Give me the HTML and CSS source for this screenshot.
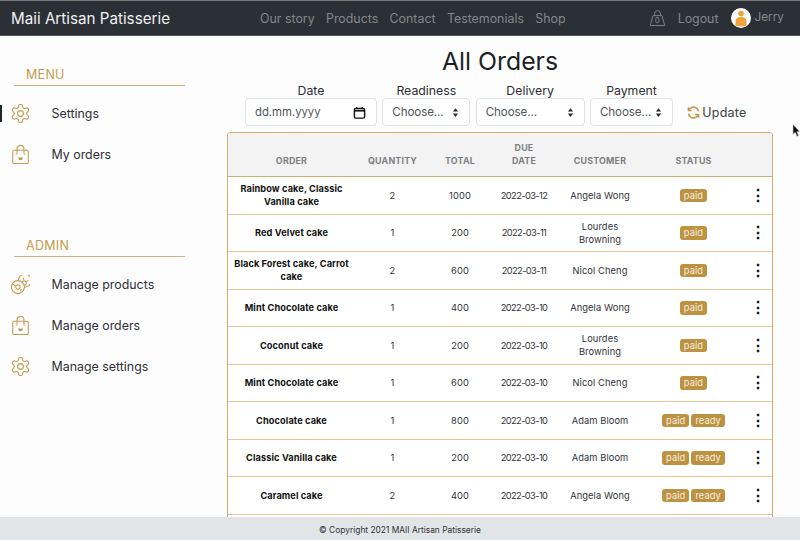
FILE: index.html
```html
<!DOCTYPE html>
<html lang="en">
<head>
<meta charset="utf-8">
<title>All Orders</title>
<link rel="stylesheet" href="styles.css">
</head>
<body>
<svg class="defs" width="0" height="0" aria-hidden="true">
  <defs>
    <symbol id="gear" viewBox="1.500 1.500 21 21"><path d="M12.22 2h-.44a2 2 0 0 0-2 2v.18a2 2 0 0 1-1 1.73l-.43.25a2 2 0 0 1-2 0l-.15-.08a2 2 0 0 0-2.73.73l-.22.38a2 2 0 0 0 .73 2.73l.15.1a2 2 0 0 1 1 1.72v.51a2 2 0 0 1-1 1.74l-.15.09a2 2 0 0 0-.73 2.73l.22.38a2 2 0 0 0 2.73.73l.15-.08a2 2 0 0 1 2 0l.43.25a2 2 0 0 1 1 1.73V20a2 2 0 0 0 2 2h.44a2 2 0 0 0 2-2v-.18a2 2 0 0 1 1-1.73l.43-.25a2 2 0 0 1 2 0l.15.08a2 2 0 0 0 2.73-.73l.22-.39a2 2 0 0 0-.73-2.73l-.15-.08a2 2 0 0 1-1-1.74v-.5a2 2 0 0 1 1-1.74l.15-.09a2 2 0 0 0 .73-2.73l-.22-.38a2 2 0 0 0-2.73-.73l-.15.08a2 2 0 0 1-2 0l-.43-.25a2 2 0 0 1-1-1.73V4a2 2 0 0 0-2-2z"/><circle cx="12" cy="12" r="3.200"/></symbol>
    <symbol id="bag" viewBox="1.500 0.500 21 22"><rect x="3" y="6.500" width="18" height="15.500" rx="1.500"/><path d="M8 10V5a4 4 0 0 1 8 0v5"/><path d="M6.500 11h2M15.500 11h2"/><path d="M10 15.500c0 2.600 4 2.600 4 0z" fill="currentColor"/></symbol>
    <symbol id="donuts" viewBox="1 1 22 22"><circle cx="9" cy="15" r="7.500"/><circle cx="9" cy="15" r="2.600"/><path d="M9.500 7.500A7.500 7.500 0 1 1 16.500 15"/><path d="M13.500 10a2.600 2.600 0 1 1 2.800 2.800"/><path d="M3 11.500l3 2M12 20l1-3M15 4l1 3M21 7l-2 2"/></symbol>
  </defs>
</svg>
<header class="navbar">
  <a class="brand">Maii Artisan Patisserie</a>
  <nav class="nav-links">
    <a>Our story</a><a>Products</a><a>Contact</a><a>Testemonials</a><a>Shop</a>
  </nav>
  <div class="nav-right">
    <span class="cart">
      <svg viewBox="0 0 18 18" width="17" height="18"><path d="M4.200 6.500h9.600L16.600 17H1.400z"/><path d="M6 6.500V4.200a3 3 0 0 1 6 0v2.300"/></svg>
      <span class="cart-num">0</span>
    </span>
    <a class="logout">Logout</a>
    <span class="avatar">
      <svg viewBox="0 0 20 20" width="20" height="20"><circle cx="10" cy="10" r="10" fill="#fff"/><circle cx="10" cy="5.600" r="2.800" fill="#eda33c"/><path d="M4.500 17.500v-4.200c0-2.600 2-4.300 5.500-4.300s5.500 1.700 5.500 4.300v4.200c-3 1.200-8 1.200-11 0z" fill="#eda33c"/></svg>
    </span>
    <span class="user">Jerry</span>
  </div>
</header>
<div class="layout">
  <aside class="sidebar">
    <section class="side-group">
      <h2 class="side-title">MENU</h2>
      <a class="side-item active"><svg class="side-icon"><use href="#gear"/></svg><span>Settings</span></a>
      <a class="side-item"><svg class="side-icon"><use href="#bag"/></svg><span>My orders</span></a>
    </section>
    <section class="side-group admin">
      <h2 class="side-title">ADMIN</h2>
      <a class="side-item"><svg class="side-icon"><use href="#donuts"/></svg><span>Manage products</span></a>
      <a class="side-item"><svg class="side-icon"><use href="#bag"/></svg><span>Manage orders</span></a>
      <a class="side-item"><svg class="side-icon"><use href="#gear"/></svg><span>Manage settings</span></a>
    </section>
  </aside>
  <main class="main">
    <h1 class="title">All Orders</h1>
    <div class="filters">
      <div class="field f-date"><label>Date</label>
        <div class="control"><span class="date-text">dd.mm.yyyy</span>
          <svg viewBox="0 0 14 14" width="13" height="13"><rect x="1.500" y="2.500" width="11" height="10.500" rx="1.500" fill="none" stroke="#111" stroke-width="1.500"/><path d="M1.500 5h11" stroke="#111" stroke-width="2"/><path d="M4 1v2M10 1v2" stroke="#111" stroke-width="1.500"/></svg>
        </div>
      </div>
      <div class="field f-ready"><label>Readiness</label><div class="control"><span>Choose...</span><svg class="updown" viewBox="0 0 8 12" width="7" height="11"><path d="M4 1l3 3.800H1zM4 11l3-3.800H1z"/></svg></div></div>
      <div class="field f-deliv"><label>Delivery</label><div class="control"><span>Choose...</span><svg class="updown" viewBox="0 0 8 12" width="7" height="11"><path d="M4 1l3 3.800H1zM4 11l3-3.800H1z"/></svg></div></div>
      <div class="field f-pay"><label>Payment</label><div class="control"><span>Choose...</span><svg class="updown" viewBox="0 0 8 12" width="7" height="11"><path d="M4 1l3 3.800H1zM4 11l3-3.800H1z"/></svg></div></div>
      <button class="update">
        <svg viewBox="0 0 16 16" width="13" height="13"><path d="M14 6.500A6 6 0 0 0 3.500 3.500L1.800 5.500M2 9.500a6 6 0 0 0 10.500 3l1.700-2"/><path d="M1.800 1.500v4h4M14.200 14.500v-4h-4"/></svg>
        Update
      </button>
    </div>
    <div class="table-wrap">
      <table class="orders">
        <colgroup><col class="c-order"><col class="c-qty"><col class="c-total"><col class="c-date"><col class="c-cust"><col class="c-status"><col class="c-menu"></colgroup>
        <thead><tr><th>ORDER</th><th>QUANTITY</th><th>TOTAL</th><th>DUE<br>DATE</th><th>CUSTOMER</th><th>STATUS</th><th></th></tr></thead>
        <tbody>
          <tr><td class="name">Rainbow cake, Classic Vanilla cake</td><td>2</td><td>1000</td><td class="due">2022-03-12</td><td>Angela Wong</td><td><span class="badge">paid</span></td><td class="dots">⋮</td></tr>
          <tr><td class="name">Red Velvet cake</td><td>1</td><td>200</td><td class="due">2022-03-11</td><td>Lourdes Browning</td><td><span class="badge">paid</span></td><td class="dots">⋮</td></tr>
          <tr><td class="name">Black Forest cake, Carrot cake</td><td>2</td><td>600</td><td class="due">2022-03-11</td><td>Nicol Cheng</td><td><span class="badge">paid</span></td><td class="dots">⋮</td></tr>
          <tr><td class="name">Mint Chocolate cake</td><td>1</td><td>400</td><td class="due">2022-03-10</td><td>Angela Wong</td><td><span class="badge">paid</span></td><td class="dots">⋮</td></tr>
          <tr><td class="name">Coconut cake</td><td>1</td><td>200</td><td class="due">2022-03-10</td><td>Lourdes Browning</td><td><span class="badge">paid</span></td><td class="dots">⋮</td></tr>
          <tr><td class="name">Mint Chocolate cake</td><td>1</td><td>600</td><td class="due">2022-03-10</td><td>Nicol Cheng</td><td><span class="badge">paid</span></td><td class="dots">⋮</td></tr>
          <tr><td class="name">Chocolate cake</td><td>1</td><td>800</td><td class="due">2022-03-10</td><td>Adam Bloom</td><td><span class="badge">paid</span><span class="badge">ready</span></td><td class="dots">⋮</td></tr>
          <tr><td class="name">Classic Vanilla cake</td><td>1</td><td>200</td><td class="due">2022-03-10</td><td>Adam Bloom</td><td><span class="badge">paid</span><span class="badge">ready</span></td><td class="dots">⋮</td></tr>
          <tr><td class="name">Caramel cake</td><td>2</td><td>400</td><td class="due">2022-03-10</td><td>Angela Wong</td><td><span class="badge">paid</span><span class="badge">ready</span></td><td class="dots">⋮</td></tr>
          <tr><td class="name"></td><td></td><td></td><td></td><td></td><td></td><td></td></tr>
        </tbody>
      </table>
    </div>
  </main>
</div>
<footer class="footer">© Copyright 2021 MAII Artisan Patisserie</footer>
<svg class="cursor" viewBox="0 0 10 15" width="9" height="14"><path d="M1 0v11.500l2.600-2.400 1.800 4.400 2-.9-1.900-4.200H9z" fill="#111" stroke="#fff" stroke-width=".6"/></svg>
</body>
</html>
```

FILE: styles.css
```css
* { box-sizing: border-box; }
html, body { margin: 0; height: 100%; }
body {
  display: flex;
  flex-direction: column;
  height: 540px;
  overflow: hidden;
  background: #fefdfe;
  color: #212529;
  font-family: Inter, "Open Sans", sans-serif;
  position: relative;
}
.defs { position: absolute; }

.navbar {
  flex: 0 0 36px;
  display: flex;
  align-items: center;
  background: #2b2f36;
  border-top: 1px solid #777;
  border-bottom: 1px solid #555;
  padding-left: 11px;
  color: #85878b;
  font-size: 12.400px;
}
.brand { color: #f1f1f1; font-size: 15.200px; width: 249px; white-space: nowrap; }
.nav-links { display: flex; gap: 11.300px; }
.nav-right { display: flex; align-items: center; margin-left: auto; padding-right: 16px; }
.cart { position: relative; display: flex; margin-right: 12px; }
.cart svg { fill: none; stroke: #85878b; stroke-width: 1; }
.cart-num { position: absolute; left: 6px; top: 6px; font-size: 8px; }
.logout { margin-right: 12px; }
.avatar { display: flex; margin-right: 4px; }
.user { position: relative; top: -1px; font-size: 11.800px; }

.layout { flex: 1; min-height: 0; display: flex; overflow: hidden; }

.sidebar { flex: 0 0 227px; padding-top: 30px; }
.side-group { width: 185px; }
.admin { margin-top: 62px; }
.side-title {
  margin: 0 0 0 14px;
  padding: 0 0 2px 12px;
  border-bottom: 1.500px solid #cdb27c;
  color: #c49b4d;
  font-size: 12.500px;
  font-weight: 400;
  line-height: 17px;
  letter-spacing: .3px;
}
.side-item {
  display: flex;
  align-items: center;
  gap: 22px;
  height: 41px;
  padding-left: 10.500px;
  font-size: 12.400px;
  color: #2d3036;
  position: relative;
}
.side-group .side-title + .side-item { margin-top: 7px; }
.side-icon { width: 19px; height: 19px; fill: none; stroke: #c29b50; stroke-width: 1.200; color: #c29b50; flex: none; }
.active::before { content: ""; position: absolute; left: 0; top: 12px; width: 2px; height: 17px; background: #23262b; }

.main { flex: 1; min-width: 0; padding-right: 27px; }
.title { margin: 10px 0 0; text-align: center; font-size: 24.800px; line-height: 30px; font-weight: 400; color: #1c1f24; }

.filters { display: flex; align-items: flex-end; margin: 5px 0 0 18px; height: 45px; }
.field { display: flex; flex-direction: column; align-items: stretch; margin-right: 5.330px; }
.field label { text-align: center; font-size: 12.300px; line-height: 15px; color: #2b2e33; }
.control {
  height: 28px;
  display: flex;
  align-items: center;
  justify-content: space-between;
  background: #fff;
  border: 1px solid #dfe2e6;
  border-radius: 4px;
  padding: 0 10px 0 9px;
  font-size: 11.600px;
  color: #50555b;
  letter-spacing: -.1px;
}
.f-date { width: 132px; }
.f-ready { width: 88px; }
.f-deliv { width: 109px; }
.f-pay { width: 83px; }
.update {
  height: 28px;
  display: flex;
  align-items: center;
  gap: 2px;
  margin-left: 9px;
  padding: 0;
  border: 0;
  background: none;
  font: inherit;
  font-size: 12.500px;
  color: #3a3d42;
  letter-spacing: .2px;
}
.update svg { fill: none; stroke: #c49b4d; stroke-width: 2; }
.date-text { font-size: 11.300px; letter-spacing: 0; }
.updown { fill: #2b2e33; flex: none; }

.table-wrap { margin-top: 6px; border: 1px solid #cfae6e; border-bottom: 0; border-radius: 4px 4px 0 0; overflow: hidden; }
.orders { width: 100%; table-layout: fixed; border-collapse: collapse; background: #fff; }
.c-order { width: 127px; }
.c-qty { width: 75px; }
.c-total { width: 60px; }
.c-date { width: 68px; }
.c-cust { width: 84px; }
.c-status { width: 103px; }
.c-menu { width: 27px; }
.orders th {
  height: 43.500px;
  padding: 0 0 9px;
  background: #f3f3f3;
  border-bottom: 1px solid #cfae6e;
  color: #7d7f84;
  font-size: 8.900px;
  line-height: 13px;
  font-weight: 700;
  vertical-align: bottom;
  letter-spacing: .2px;
}
.orders td {
  height: 37.500px;
  padding: 0 5px;
  text-align: center;
  border-bottom: 1.500px solid #e3c88f;
  font-size: 9.300px;
  line-height: 13px;
  color: #303338;
  letter-spacing: .1px;
}
.orders td.name { font-weight: 700; color: #111; padding: 0 4px; font-size: 9.200px; }
.orders td.due { letter-spacing: -.6px; padding: 0; }
.orders td.dots { font-size: 16px; font-weight: 700; color: #111; padding: 0; }
.badge {
  display: inline-block;
  height: 13.500px;
  padding: 0 4px;
  margin: 0 1px;
  border-radius: 3px;
  background: #bd9341;
  color: #f6efe0;
  font-size: 9.300px;
  line-height: 13.500px;
}

.footer {
  flex: 0 0 23px;
  display: flex;
  align-items: center;
  justify-content: center;
  padding-top: 2px;
  background: #e2e5e8;
  font-size: 8.400px;
  color: #2f3237;
}
.cursor { position: absolute; left: 792px; top: 124px; }
```
